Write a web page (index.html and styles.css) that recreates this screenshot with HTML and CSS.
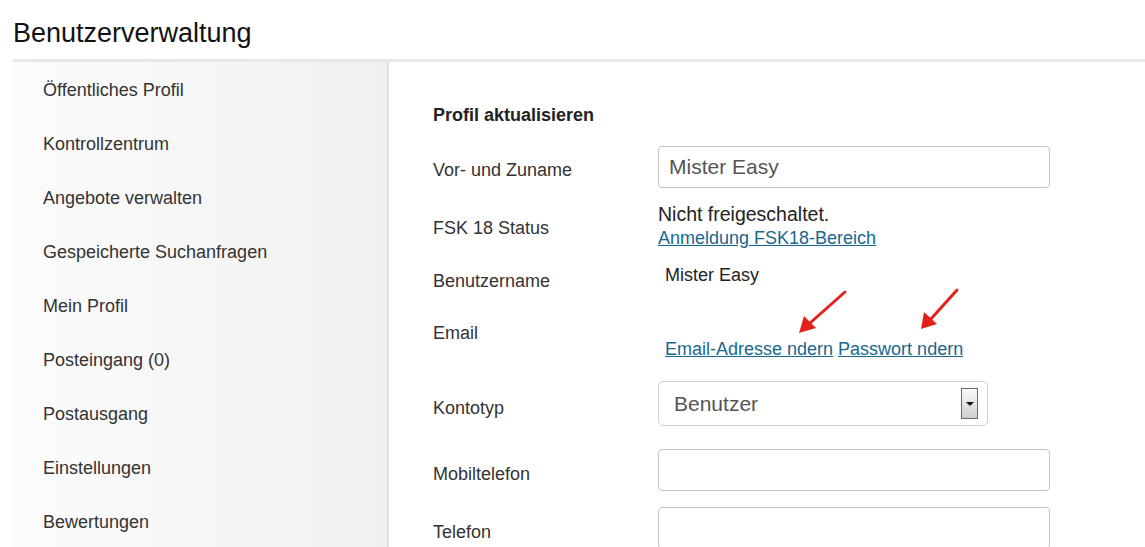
FILE: index.html
```html
<!DOCTYPE html>
<html lang="de">
<head>
  <meta charset="UTF-8" />
  <meta name="viewport" content="width=device-width, initial-scale=1.0"/>
  <title>Benutzerverwaltung</title>
  <link rel="stylesheet" href="styles.css">
</head>
<body>

<h1 class="page-title">Benutzerverwaltung</h1>

<div class="layout">
  <ul class="sidebar">
    <li>Öffentliches Profil</li>
    <li>Kontrollzentrum</li>
    <li>Angebote verwalten</li>
    <li>Gespeicherte Suchanfragen</li>
    <li>Mein Profil</li>
    <li>Posteingang (0)</li>
    <li>Postausgang</li>
    <li>Einstellungen</li>
    <li>Bewertungen</li>
  </ul>

  <div class="main">
    <h3 class="section-title">Profil aktualisieren</h3>

    <div class="row row-name">
      <div class="label">Vor- und Zuname</div>
      <div class="field"><input class="text-input" type="text" value="Mister Easy"></div>
    </div>

    <div class="row row-fsk">
      <div class="label">FSK 18 Status</div>
      <div class="field value-block">
        <span class="status">Nicht freigeschaltet.</span><br>
        <a href="#">Anmeldung FSK18-Bereich</a>
      </div>
    </div>

    <div class="row row-user">
      <div class="label">Benutzername</div>
      <div class="field value-indent">Mister Easy</div>
    </div>

    <div class="row row-email">
      <div class="label">Email</div>
      <div class="field value-indent links">
        <a href="#">Email-Adresse ndern</a> <a href="#">Passwort ndern</a>
      </div>
    </div>

    <div class="row row-type">
      <div class="label">Kontotyp</div>
      <div class="field">
        <div class="select">
          <span>Benutzer</span>
          <span class="select-btn"><span class="caret"></span></span>
        </div>
      </div>
    </div>

    <div class="row row-mobile">
      <div class="label">Mobiltelefon</div>
      <div class="field"><input class="text-input" type="text"></div>
    </div>

    <div class="row row-phone">
      <div class="label">Telefon</div>
      <div class="field"><input class="text-input" type="text"></div>
    </div>
  </div>
</div>

<!-- annotation arrows drawn over the screenshot -->
<svg class="arrows" width="1145" height="547" viewBox="0 0 1145 547">
  <g stroke="#e2231a" stroke-width="3" stroke-linecap="round">
    <line x1="845" y1="292" x2="810" y2="323"/>
    <line x1="957" y1="290" x2="930" y2="320"/>
  </g>
  <g fill="#e2231a">
    <polygon points="799,333 804,316 816,328"/>
    <polygon points="921,329 924,312 937,324"/>
  </g>
</svg>

</body>
</html>
```

FILE: styles.css
```css
body {
  font-family: "Liberation Sans", Arial, sans-serif;
  margin: 0;
  color: #333;
  background: #fff;
  position: relative;
  overflow: hidden;
}
.page-title {
  font-size: 27px;
  font-weight: normal;
  color: #111;
  margin: 0;
  padding: 18px 0 0 13px;
  height: 41px;
  line-height: 30px;
}
.layout {
  display: flex;
  margin-left: 13px;
  border-top: 3px solid #e8e8e8;
  height: 500px;
}
.sidebar {
  list-style: none;
  margin: 0;
  padding: 1px 0 0;
  width: 374px;
  background: linear-gradient(to right, #fcfcfc, #f0f0f0);
  border-right: 2px solid #e2e2e2;
}
.sidebar li {
  height: 54px;
  line-height: 54px;
  padding-left: 30px;
  font-size: 18px;
  color: #333;
}
.main {
  flex: 1;
  padding: 43px 0 0 44px;
}
.section-title {
  margin: 0;
  font-size: 18px;
  line-height: 20px;
  color: #222;
}
.row {
  display: flex;
  align-items: flex-start;
}
.label {
  width: 225px;
  font-size: 18px;
  line-height: 18px;
  color: #333;
}
.field {
  font-size: 18px;
  line-height: 18px;
}
.text-input {
  box-sizing: border-box;
  width: 392px;
  height: 42px;
  border: 1px solid #c4c4c4;
  border-radius: 4px;
  padding: 0 10px;
  font-family: inherit;
  font-size: 21px;
  color: #555;
  outline: none;
}
a {
  color: #17688e;
  text-decoration: underline;
}
.row-name { margin-top: 21px; }
.row-name .label { padding-top: 15px; }
.row-fsk { margin-top: 15px; }
.row-fsk .label { padding-top: 16px; }
.value-block { line-height: 23px; color: #222; }
.status { font-size: 19.5px; }
.row-user { margin-top: 16px; }
.row-user .label { padding-top: 6px; }
.value-indent { padding-left: 7px; color: #222; }
.row-email { margin-top: 34px; }
.links { padding-top: 16px; }
.row-type { margin-top: 23px; }
.row-type .label { padding-top: 18px; }
.select {
  box-sizing: border-box;
  width: 330px;
  height: 45px;
  border: 1px solid #cfcfcf;
  border-radius: 5px;
  display: flex;
  align-items: center;
  justify-content: space-between;
  padding: 0 9px 0 15px;
  font-size: 21px;
  color: #555;
}
.select-btn {
  box-sizing: border-box;
  width: 17px;
  height: 31px;
  border: 1px solid #6a6a6a;
  background: linear-gradient(to bottom, #fafafa, #cfcfcf);
  display: flex;
  align-items: center;
  justify-content: center;
}
.caret {
  width: 0;
  height: 0;
  border-left: 4px solid transparent;
  border-right: 4px solid transparent;
  border-top: 4px solid #111;
}
.row-mobile { margin-top: 23px; }
.row-mobile .label { padding-top: 16px; }
.row-phone { margin-top: 16px; }
.row-phone .label { padding-top: 16px; }
.arrows {
  position: absolute;
  left: 0;
  top: 0;
  pointer-events: none;
}
```
